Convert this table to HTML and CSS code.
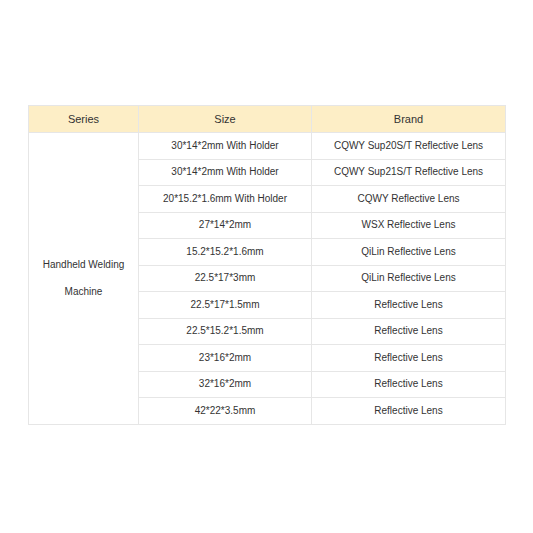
FILE: index.html
```html
<!DOCTYPE html>
<html>
<head>
<meta charset="utf-8">
<link rel="stylesheet" href="styles.css">
</head>
<body>
<div class="page">
<table class="spec">
<colgroup><col class="c1"><col class="c2"><col class="c3"></colgroup>
<thead>
<tr><th>Series</th><th>Size</th><th>Brand</th></tr>
</thead>
<tbody>
<tr><td rowspan="11" class="series">Handheld Welding<br>Machine</td><td>30*14*2mm With Holder</td><td>CQWY Sup20S/T Reflective Lens</td></tr>
<tr><td>30*14*2mm With Holder</td><td>CQWY Sup21S/T Reflective Lens</td></tr>
<tr><td>20*15.2*1.6mm With Holder</td><td>CQWY Reflective Lens</td></tr>
<tr><td>27*14*2mm</td><td>WSX Reflective Lens</td></tr>
<tr><td>15.2*15.2*1.6mm</td><td>QiLin Reflective Lens</td></tr>
<tr><td>22.5*17*3mm</td><td>QiLin Reflective Lens</td></tr>
<tr><td>22.5*17*1.5mm</td><td>Reflective Lens</td></tr>
<tr><td>22.5*15.2*1.5mm</td><td>Reflective Lens</td></tr>
<tr><td>23*16*2mm</td><td>Reflective Lens</td></tr>
<tr><td>32*16*2mm</td><td>Reflective Lens</td></tr>
<tr><td>42*22*3.5mm</td><td>Reflective Lens</td></tr>
</tbody>
</table>
</div>
</body>
</html>
```
FILE: styles.css
```css
html, body { margin: 0; padding: 0; background: #fff; }
body { font-family: "Liberation Sans", Arial, sans-serif; color: #333; }
.page { width: 533px; height: 533px; padding: 105px 0 0 28px; box-sizing: border-box; }
.spec { border-collapse: collapse; width: 477px; table-layout: fixed; font-size: 10px; }
.c1 { width: 110px; }
.c2 { width: 173px; }
.c3 { width: 194px; }
.spec th, .spec td { border: 1px solid #e6e6e6; text-align: center; padding: 0; height: 25.5px; line-height: 12px; }
.spec th { background: #fdeec6; font-weight: normal; font-size: 11px; height: 26px; color: #333; }
.spec td.series { line-height: 27px; }
```
